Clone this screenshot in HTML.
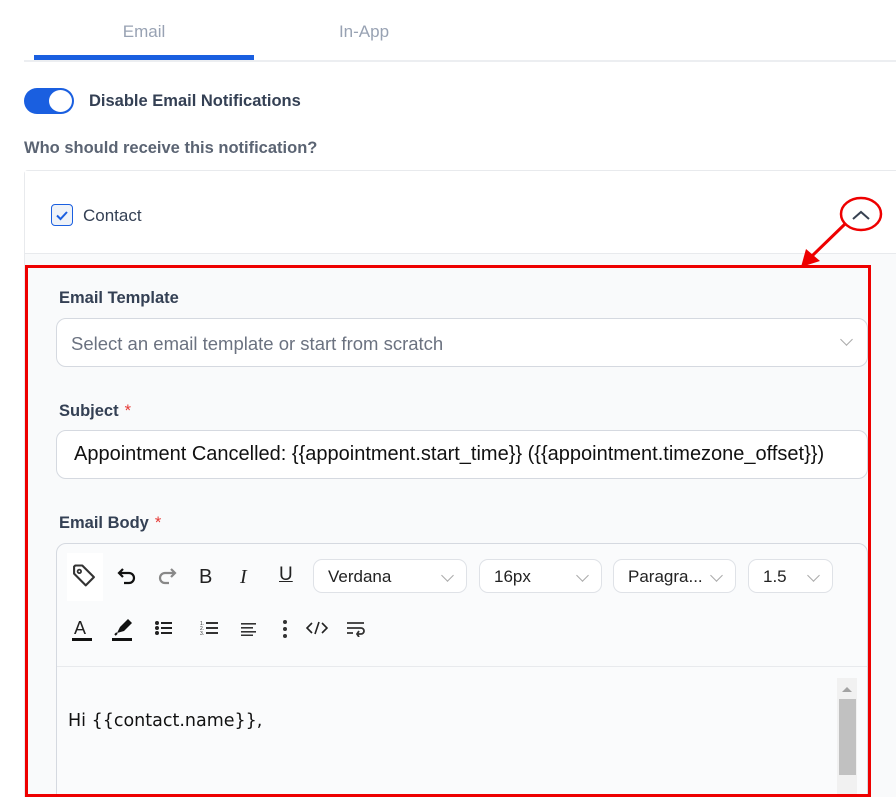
<!DOCTYPE html>
<html style="width:896px;height:797px;overflow:hidden"><head><style>
*{box-sizing:border-box;margin:0;padding:0}
body{width:896px;height:797px;overflow:hidden;background:#fff;font-family:"Liberation Sans",Arial,sans-serif;position:relative}
.a{position:absolute}
.lbl{position:absolute;left:59px;font-size:16.5px;font-weight:bold;color:#344054}
.star{color:#e53935;font-weight:normal;margin-left:6px}
.box{position:absolute;left:56px;width:812px;height:49px;background:#fff;border:1px solid #d5d9e0;border-radius:10px}
.sel{position:absolute;top:559px;height:34px;border:1px solid #dfe2e7;border-radius:9px;background:#fff;font-size:17px;color:#222;padding:7px 0 0 14px}
.chev{position:absolute;right:14px;top:11px;width:9px;height:9px;border-right:1px solid #aaa;border-bottom:1px solid #aaa;transform:rotate(45deg)}
.ic{position:absolute;color:#222}
</style></head><body>
<div class="a" style="left:0;top:22px;width:288px;text-align:center;font-size:17px;color:#98a2b3">Email</div>
<div class="a" style="left:250px;top:22px;width:228px;text-align:center;font-size:17px;color:#98a2b3">In-App</div>
<div class="a" style="left:24px;top:60px;width:872px;height:2px;background:#eceef1"></div>
<div class="a" style="left:34px;top:55px;width:220px;height:5px;background:#1a5fe0"></div>

<div class="a" style="left:24px;top:88px;width:50px;height:26px;border-radius:13px;background:#1a5fe0"></div>
<div class="a" style="left:49px;top:90px;width:23px;height:22px;border-radius:50%;background:#fff"></div>
<div class="a" style="left:89px;top:92px;font-size:16.5px;font-weight:bold;color:#344054">Disable Email Notifications</div>
<div class="a" style="left:24px;top:139px;font-size:16.5px;font-weight:bold;color:#5b6473">Who should receive this notification?</div>

<div class="a" style="left:24px;top:170px;width:880px;height:640px;border:1px solid #e8eaed;border-radius:4px;background:#f9fafb"></div>
<div class="a" style="left:25px;top:171px;width:871px;height:83px;background:#fff;border-bottom:1px solid #e8eaed"></div>
<div class="a" style="left:51px;top:204px;width:22px;height:22px;border:1.5px solid #1a5fe0;border-radius:4px;background:#eef2f8"></div>
<svg class="a" style="left:51px;top:204px" width="22" height="22"><path d="M6 11.5l3.5 3.5 6.5-7" fill="none" stroke="#1a5fe0" stroke-width="2"/></svg>
<div class="a" style="left:83px;top:206px;font-size:17px;color:#344054">Contact</div>

<div class="lbl" style="top:289px">Email Template</div>
<div class="box" style="top:318px"><span class="a" style="left:14px;top:14px;font-size:18.5px;color:#6b7280">Select an email template or start from scratch</span><div class="chev" style="top:16px;right:16px"></div></div>
<div class="lbl" style="top:402px">Subject<span class="star">*</span></div>
<div class="box" style="top:430px"><span class="a" style="left:17px;top:12px;font-size:20px;color:#111">Appointment Cancelled: {{appointment.start_time}} ({{appointment.timezone_offset}})</span></div>
<div class="lbl" style="top:514px">Email Body<span class="star">*</span></div>

<div class="a" style="left:56px;top:543px;width:812px;height:270px;border:1px solid #d5d9e0;border-radius:10px;background:#fafbfc"></div>
<div class="a" style="left:57px;top:666px;width:810px;height:1px;background:#e8eaed"></div>
<div class="a" style="left:67px;top:553px;width:36px;height:48px;background:#fff"></div>
<svg class="a" style="left:70px;top:562px" width="28" height="28" viewBox="0 0 24 24"><path d="M3 4v6l10 10 7-7L10 3H4z" fill="none" stroke="#333" stroke-width="1.8" stroke-linejoin="round" transform="translate(0.5,0)"/><circle cx="8" cy="8" r="1.5" fill="none" stroke="#333" stroke-width="1.5"/></svg>
<svg class="a" style="left:116px;top:566px" width="22" height="20" viewBox="0 0 22 20"><path d="M7 3L3 7l4 4M3 7h10a5 5 0 010 10H8" fill="none" stroke="#111" stroke-width="2.2"/></svg>
<svg class="a" style="left:156px;top:566px" width="22" height="20" viewBox="0 0 22 20"><path d="M15 3l4 4-4 4M19 7H9a5 5 0 000 10h4" fill="none" stroke="#888" stroke-width="2.2"/></svg>
<div class="ic" style="left:199px;top:566px;font-size:20px">B</div>
<div class="ic" style="left:240px;top:566px;font-size:20px;font-style:italic;font-family:'Liberation Serif',serif">I</div>
<div class="ic" style="left:279px;top:564px;font-size:19px;text-decoration:underline">U</div>
<div class="sel" style="left:313px;width:154px">Verdana<div class="chev"></div></div>
<div class="sel" style="left:479px;width:123px">16px<div class="chev"></div></div>
<div class="sel" style="left:613px;width:123px">Paragra...<div class="chev"></div></div>
<div class="sel" style="left:748px;width:85px">1.5<div class="chev"></div></div>

<div class="ic" style="left:74px;top:618px;font-size:18px">A</div>
<div class="a" style="left:72px;top:638px;width:20px;height:3px;background:#111"></div>
<svg class="a" style="left:112px;top:618px" width="22" height="20" viewBox="0 0 22 20"><path d="M5 15l3-6 8-8 4 4-8 8z" fill="#111"/><path d="M3 17l2-2" stroke="#111" stroke-width="2"/></svg>
<div class="a" style="left:112px;top:638px;width:20px;height:3px;background:#111"></div>
<svg class="a" style="left:154px;top:620px" width="20" height="16"><g fill="#222"><circle cx="3" cy="3" r="2"/><circle cx="3" cy="8" r="2"/><circle cx="3" cy="13" r="2"/><rect x="7" y="2" width="11" height="2"/><rect x="7" y="7" width="11" height="2"/><rect x="7" y="12" width="11" height="2"/></g></svg>
<svg class="a" style="left:200px;top:620px" width="20" height="16"><g fill="#333"><text x="0" y="5" font-size="5">1.</text><text x="0" y="10" font-size="5">2.</text><text x="0" y="15" font-size="5">3.</text><rect x="6" y="2" width="12" height="2"/><rect x="6" y="7" width="12" height="2"/><rect x="6" y="12" width="12" height="2"/></g></svg>
<svg class="a" style="left:240px;top:622px" width="18" height="14"><g fill="#333"><rect x="1" y="1" width="15" height="1.6"/><rect x="1" y="5" width="12" height="1.6"/><rect x="1" y="9" width="15" height="1.6"/><rect x="1" y="12.5" width="12" height="1.6"/></g></svg>
<svg class="a" style="left:281px;top:619px" width="8" height="22"><g fill="#333"><circle cx="4" cy="3" r="2"/><circle cx="4" cy="10" r="2"/><circle cx="4" cy="17" r="2"/></g></svg>
<svg class="a" style="left:306px;top:620px" width="22" height="16"><path d="M6 3L1 8l5 5M16 3l5 5-5 5M13 2l-4 12" fill="none" stroke="#222" stroke-width="1.6"/></svg>
<svg class="a" style="left:346px;top:621px" width="20" height="16"><path d="M1 2h17M1 7h14a3 3 0 010 6h-4M1 12h6M13 10l-2 3 2 3" fill="none" stroke="#333" stroke-width="1.8"/></svg>

<div class="a" style="left:68px;top:711px;font-size:17.5px;color:#111;font-family:'DejaVu Sans',Verdana,sans-serif">Hi {{contact.name}},</div>
<div class="a" style="left:837px;top:678px;width:20px;height:125px;background:#f1f1f1"></div>
<div class="a" style="left:839px;top:699px;width:17px;height:76px;background:#c1c1c1"></div>
<svg class="a" style="left:841px;top:686px" width="12" height="8"><path d="M1 6l5-5 5 5z" fill="#a3a3a3"/></svg>

<div class="a" style="left:25px;top:265px;width:846px;height:532px;border:3px solid #e00"></div>
<svg class="a" style="left:0;top:0" width="896" height="797">
<path d="M853 219l8-7 8 7" fill="none" stroke="#374151" stroke-width="2"/>
<ellipse cx="861" cy="214" rx="20" ry="16" fill="none" stroke="#e00" stroke-width="2.5"/>
<line x1="845" y1="224" x2="812" y2="256" stroke="#e00" stroke-width="3"/>
<polygon points="801,267 806,249 820,261" fill="#e00"/>
</svg>
</body></html>
